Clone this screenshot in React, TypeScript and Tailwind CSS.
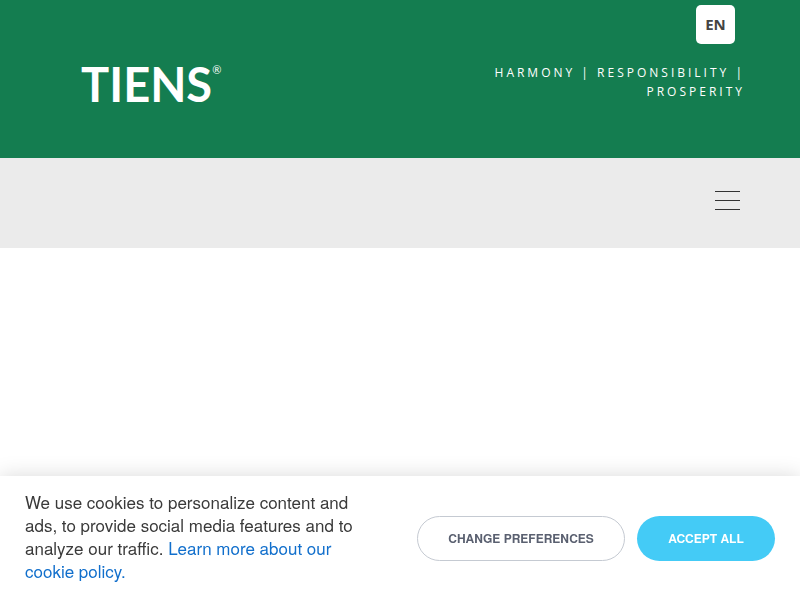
function Header() {
  return (
    <header className="flex h-[158px] items-start justify-between bg-[#147d50] pr-[55px] pl-[81px]">
      {/* Logo */}
      <a
        href="/"
        aria-label="Tiens home"
        className="mt-[54px] flex items-start font-['Lato',sans-serif] text-white"
      >
        <span className="text-[47px] leading-[60px] font-bold">TIENS</span>
        <span className="mt-[10px] text-[11px] leading-3">®</span>
      </a>

      <div className="flex w-64 flex-col items-end font-['Open_Sans',sans-serif]">
        <button
          type="button"
          className="mt-[5px] mr-[10px] h-[39px] w-[39px] rounded-[5px] bg-white text-[15px] font-bold text-[#444]"
        >
          EN
        </button>
        <p className="mt-[19px] text-right text-xs leading-[19px] tracking-[3px] text-white">
          HARMONY | RESPONSIBILITY | PROSPERITY
        </p>
      </div>
    </header>
  );
}

function NavBar() {
  return (
    <nav className="flex h-[90px] items-start justify-end bg-[#ebebeb] pt-[33px] pr-15">
      <button type="button" aria-label="Open menu" className="flex w-[25px] flex-col gap-2">
        <span className="h-px w-full bg-[#333]" />
        <span className="h-px w-full bg-[#333]" />
        <span className="h-px w-full bg-[#333]" />
      </button>
    </nav>
  );
}

function CookieBanner() {
  return (
    <section
      aria-label="Cookie consent"
      className="fixed inset-x-0 bottom-0 flex items-center justify-between bg-white px-[25px] py-[14px] font-['Helvetica_Neue','Nimbus_Sans','TeX_Gyre_Heros','FreeSans','Liberation_Sans',sans-serif] shadow-[0_0_20px_rgba(0,0,0,0.15)]"
    >
      <p className="max-w-[332px] pb-1 text-[17px] leading-[23px] text-[#3a3a3a]">
        We use cookies to personalize content and ads, to provide social media features and to
        analyze our traffic.{' '}
        <a href="/cookie-policy" className="text-[#116fcc]">
          Learn more about our cookie policy.
        </a>
      </p>
      <div className="flex shrink-0 gap-3 text-xs font-bold">
        <button
          type="button"
          className="h-[45px] w-52 rounded-full border border-[#c5cad2] text-[#5a6070]"
        >
          CHANGE PREFERENCES
        </button>
        <button type="button" className="h-[45px] w-[138px] rounded-full bg-[#44cbf6] text-white">
          ACCEPT ALL
        </button>
      </div>
    </section>
  );
}

export default function App() {
  return (
    <div className="min-h-screen bg-white">
      <Header />
      <NavBar />
      <CookieBanner />
    </div>
  );
}
